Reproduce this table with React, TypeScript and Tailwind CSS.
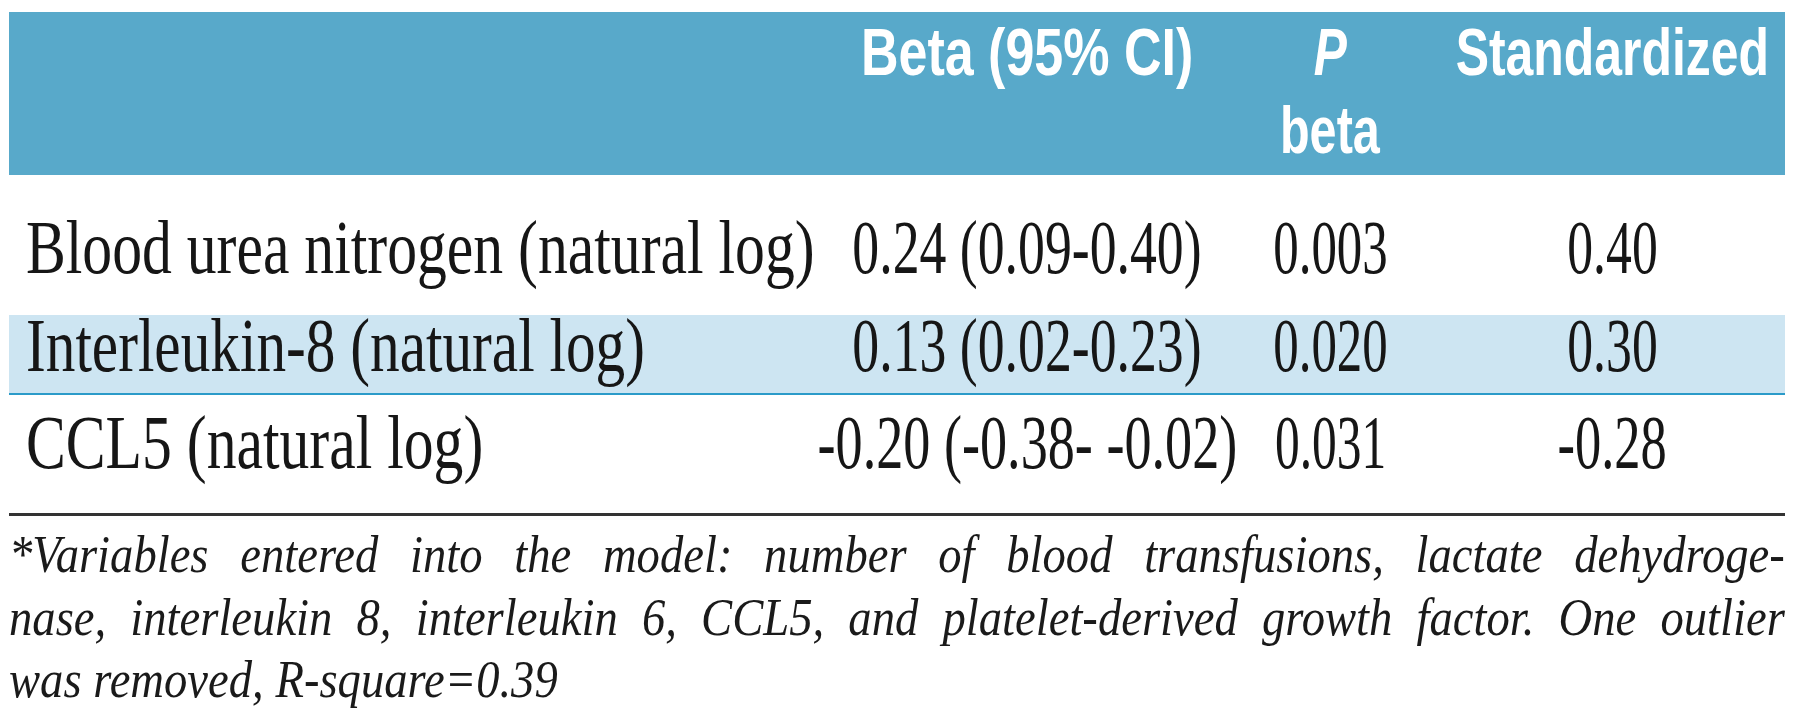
import React from "react";

type C = { t: string; s: string };

function BodyRow({ cells, cls }: { cells: C[]; cls: string }) {
  return (
    <div
      className={`grid grid-cols-[824px_388px_218px_346px] text-[76px] leading-[61px] text-[#161616] font-['Liberation_Serif',serif] ${cls}`}
    >
      <div className="flex justify-start pl-[17px]">
        <span className={`inline-block shrink-0 whitespace-nowrap origin-left ${cells[0].s}`}>{cells[0].t}</span>
      </div>
      {cells.slice(1).map((c, i) => (
        <div key={i} className="flex justify-center">
          <span className={`inline-block shrink-0 whitespace-nowrap origin-center ${c.s}`}>{c.t}</span>
        </div>
      ))}
    </div>
  );
}

export default function App() {
  return (
    <div className="w-[1800px] h-[727px] bg-white overflow-hidden pt-[12px] pl-[9px]">
      <div className="w-[1776px]">
        <div className="grid grid-cols-[824px_388px_218px_346px] h-[163px] bg-[#58a9ca] text-white font-['Liberation_Sans',sans-serif] font-bold text-[67px] leading-[78px] pt-[1px]">
          <div />
          <div className="flex justify-center">
            <span className="inline-block shrink-0 whitespace-nowrap scale-x-[0.776]">Beta (95% CI)</span>
          </div>
          <div className="flex flex-col items-center">
            <span className="inline-block shrink-0 whitespace-nowrap italic scale-x-[0.74]">P</span>
            <span className="inline-block shrink-0 whitespace-nowrap scale-x-[0.725]">beta</span>
          </div>
          <div className="flex justify-center">
            <span className="inline-block shrink-0 whitespace-nowrap scale-x-[0.745]">Standardized</span>
          </div>
        </div>

        <BodyRow
          cls="h-[140px] pt-[42px]"
          cells={[
            { t: "Blood urea nitrogen (natural log)", s: "scale-x-[0.785]" },
            { t: "0.24 (0.09-0.40)", s: "scale-x-[0.707]" },
            { t: "0.003", s: "scale-x-[0.67]" },
            { t: "0.40", s: "scale-x-[0.68]" },
          ]}
        />
        <BodyRow
          cls="h-[80px] bg-[#cde5f2] border-b-2 border-[#2b9bc9]"
          cells={[
            { t: "Interleukin-8 (natural log)", s: "scale-x-[0.78]" },
            { t: "0.13 (0.02-0.23)", s: "scale-x-[0.707]" },
            { t: "0.020", s: "scale-x-[0.67]" },
            { t: "0.30", s: "scale-x-[0.68]" },
          ]}
        />
        <BodyRow
          cls="h-[118px] pt-[17px]"
          cells={[
            { t: "CCL5 (natural log)", s: "scale-x-[0.785]" },
            { t: "-0.20 (-0.38- -0.02)", s: "scale-x-[0.713]" },
            { t: "0.031", s: "scale-x-[0.65]" },
            { t: "-0.28", s: "scale-x-[0.69]" },
          ]}
        />

        <div className="h-[3px] bg-[#333333]" />

        <div className="pt-[7px] text-[53px] leading-[62.5px] italic text-[#1a1a1a] font-['Liberation_Serif',serif]">
          <div className="w-[2018px] origin-left scale-x-[0.88] text-justify [text-align-last:justify]">
            *Variables entered into the model: number of blood transfusions, lactate dehydroge-
          </div>
          <div className="w-[2018px] origin-left scale-x-[0.88] text-justify [text-align-last:justify]">
            nase, interleukin 8, interleukin 6, CCL5, and platelet-derived growth factor. One outlier
          </div>
          <div className="w-[2018px] origin-left scale-x-[0.88] whitespace-nowrap">was removed, R-square=0.39</div>
        </div>
      </div>
    </div>
  );
}
